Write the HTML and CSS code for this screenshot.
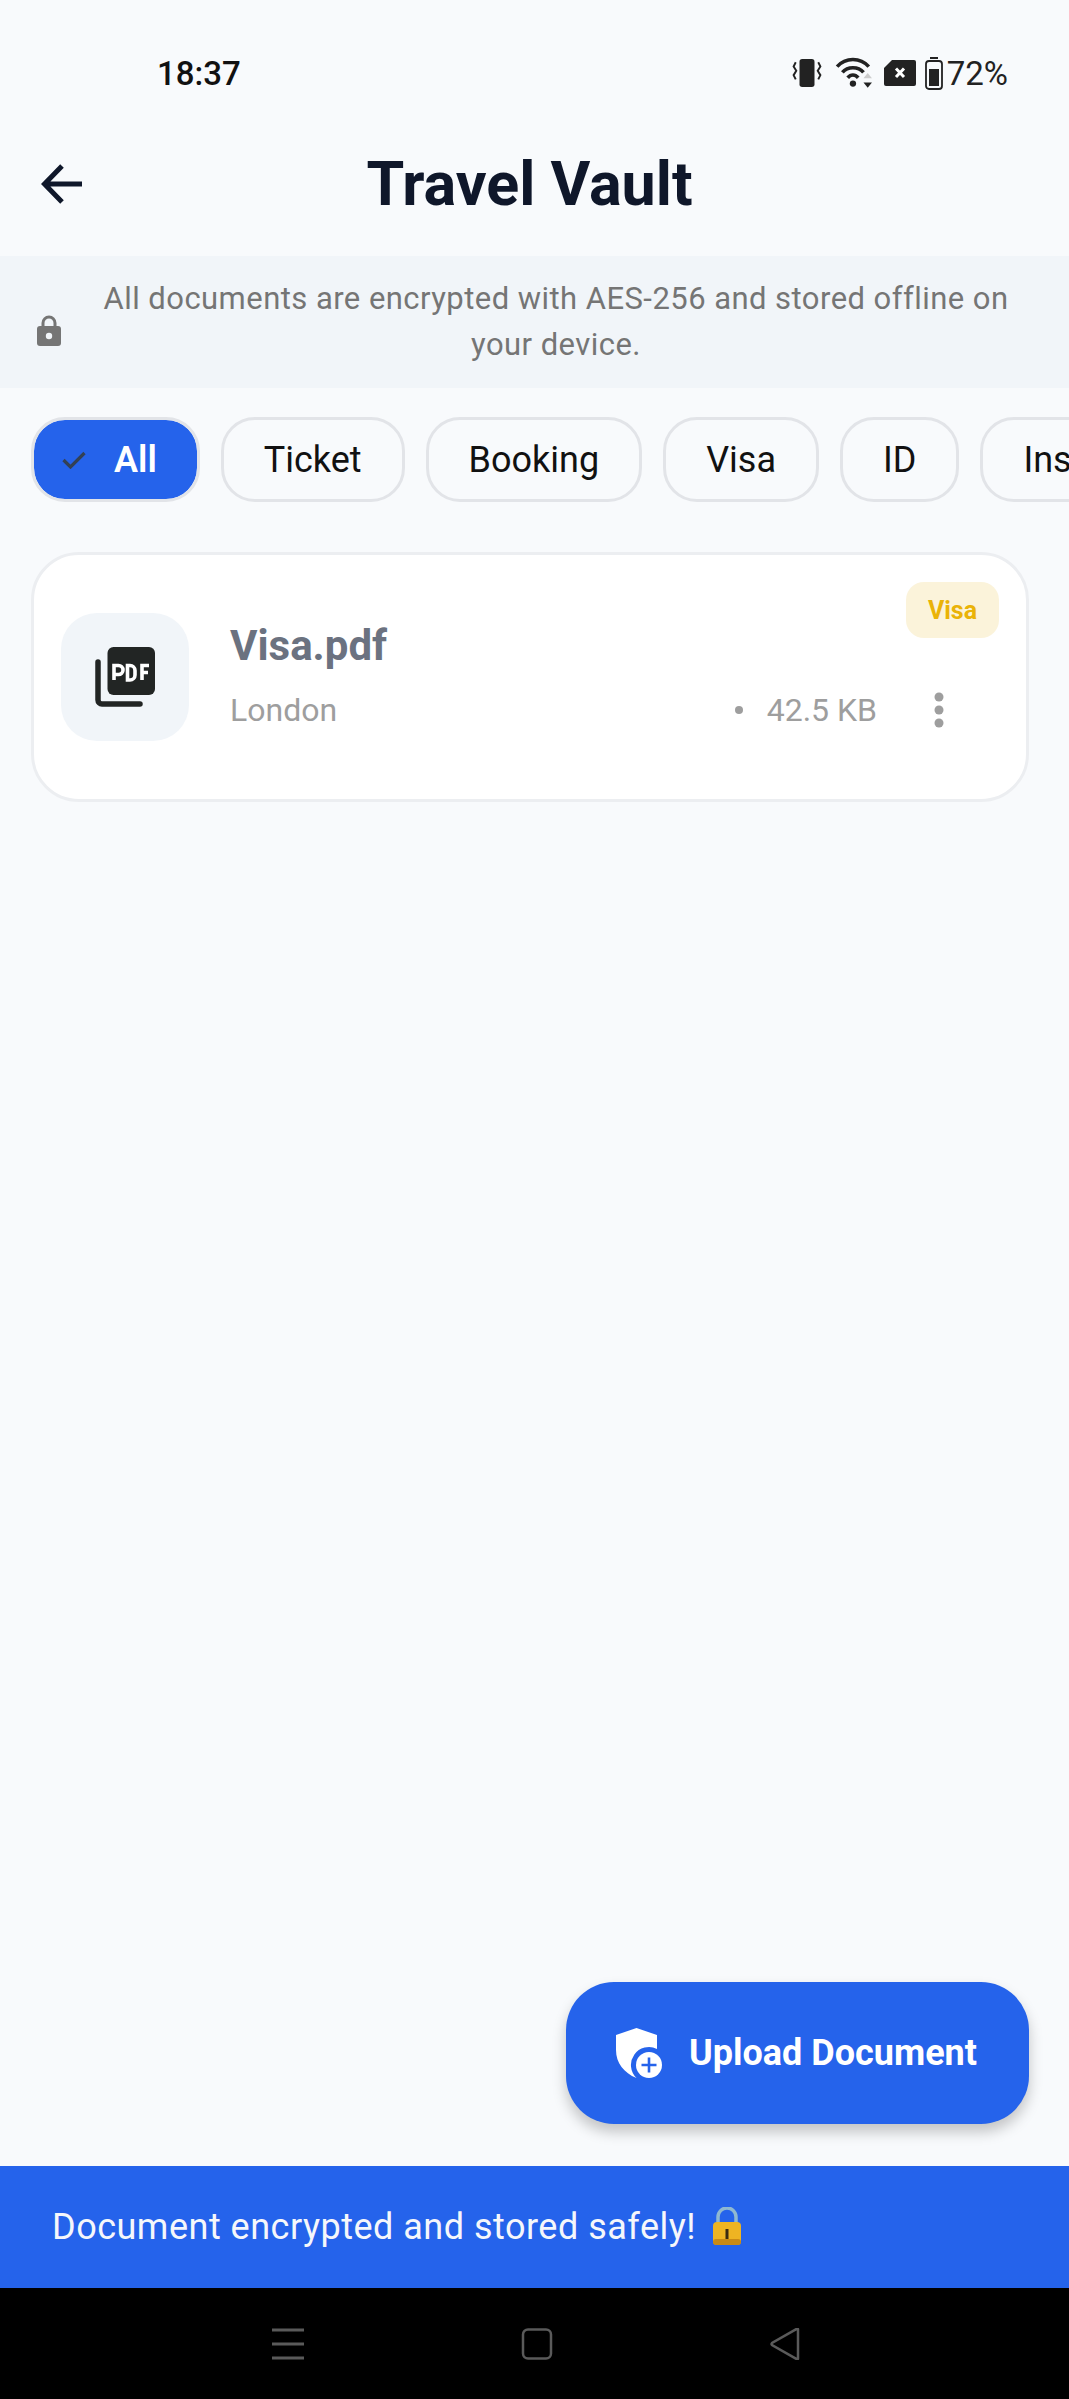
FILE: index.html
```html
<!DOCTYPE html>
<html lang="en">
<head>
  <meta charset="UTF-8">
  <meta name="viewport" content="width=device-width, initial-scale=1.0">
  <title>Travel Vault</title>
  <link rel="stylesheet" href="styles.css">
</head>
<body>
  <!-- Status bar -->
  <div class="status-bar">
    <span class="status-time">18:37</span>
    <div class="status-icons">
      <svg class="icon-vibrate" viewBox="0 0 28 28"><rect x="7" y="1" width="14" height="26" rx="2.5" fill="#222"/><path d="M3.500 4 1.500 8l2.500 4-2.500 4 2 4M24.500 4l2 4-2.500 4 2.500 4-2 4" fill="none" stroke="#222" stroke-width="1.800"/></svg>
      <svg class="icon-wifi" viewBox="0 0 36 32"><path d="M2 10C10 1 24 1 32 10M7 15.500C12 9.500 22 9.500 27 15.500M12 20.500C15 17 19 17 22 20.500" fill="none" stroke="#222" stroke-width="3.400"/><circle cx="17" cy="26" r="3" fill="#222"/><path d="M27 21h8l-4-5z" fill="#ccc"/><path d="M27 25h8l-4 5z" fill="#222"/></svg>
      <svg class="icon-sim" viewBox="0 0 32 26"><path d="M8 0h22a2 2 0 0 1 2 2v22a2 2 0 0 1-2 2H2a2 2 0 0 1-2-2V8z" fill="#222"/><path d="M12 8.500l8 8.500M20 8.500l-8 8.500" stroke="#fff" stroke-width="3"/></svg>
      <svg class="icon-battery" viewBox="0 0 18 33"><rect x="5" y="0" width="8" height="2" fill="#222"/><rect x="1" y="4" width="16" height="28" rx="3" fill="none" stroke="#222" stroke-width="1.800"/><rect x="4" y="12" width="10" height="17" fill="#222"/></svg>
      <span class="status-battery">72%</span>
    </div>
  </div>

  <!-- App bar -->
  <header class="app-bar">
    <svg class="back-icon" viewBox="0 0 42 42"><path d="M41 21H4M21 3 3.500 21 21 39" fill="none" stroke="#0f172a" stroke-width="5"/></svg>
    <h1 class="app-title">Travel Vault</h1>
  </header>

  <!-- Encryption notice -->
  <div class="notice">
    <svg class="notice-lock" viewBox="0 0 24 31"><path d="M6 13V8a6 6 0 0 1 12 0v5" fill="none" stroke="#757575" stroke-width="3"/><path d="M3 11h18a3 3 0 0 1 3 3v14a3 3 0 0 1-3 3H3a3 3 0 0 1-3-3V14a3 3 0 0 1 3-3z" fill="#757575"/><circle cx="12" cy="21" r="3.200" fill="#f1f5f9"/></svg>
    <p class="notice-text">All documents are encrypted with AES-256 and stored offline on your device.</p>
  </div>

  <!-- Filter chips -->
  <div class="chips">
    <div class="chip chip-active">
      <svg class="chip-check" viewBox="0 0 24 18"><path d="M1.500 9 8.500 16 22.500 2" fill="none" stroke="#334155" stroke-width="3.200"/></svg>
      <span>All</span>
    </div>
    <div class="chip">Ticket</div>
    <div class="chip">Booking</div>
    <div class="chip">Visa</div>
    <div class="chip">ID</div>
    <div class="chip">Insurance</div>
  </div>

  <main class="content">
    <!-- Document card -->
    <div class="doc-card">
      <div class="doc-icon">
        <svg viewBox="0 0 60 60" width="60" height="60">
          <rect x="12.500" y="0" width="47.500" height="48" rx="6" fill="#222524"/>
          <path d="M3 15v38a4 4 0 0 0 4 4h38" fill="none" stroke="#222524" stroke-width="5.500" stroke-linecap="round"/>
          <path d="M19 33V18.500h4.500a4 4 0 0 1 0 9H19M32.500 18.500V33h2.500a5 5 0 0 0 5-5v-4.500a5 5 0 0 0-5-5zM47 33V18.500h7M47 25.500h6" fill="none" stroke="#fff" stroke-width="3.600"/>
        </svg>
      </div>
      <div class="doc-info">
        <div class="doc-name">Visa.pdf</div>
        <div class="doc-meta">
          <span class="doc-place">London</span>
          <span class="doc-dot"></span>
          <span class="doc-size">42.5 KB</span>
          <svg class="doc-more" viewBox="0 0 12 36"><circle cx="6" cy="5" r="4.500" fill="#9e9e9e"/><circle cx="6" cy="18" r="4.500" fill="#9e9e9e"/><circle cx="6" cy="31" r="4.500" fill="#9e9e9e"/></svg>
        </div>
      </div>
      <span class="doc-badge">Visa</span>
    </div>

    <!-- Upload button -->
    <button class="upload-btn">
      <svg class="upload-icon" viewBox="0 0 46 50">
        <path d="M20.500 0 41 7V20.900A18 18 0 0 0 20.500 50C8 45 0 35 0 22V7z" fill="#fff"/>
        <circle cx="33" cy="37" r="13" fill="#fff"/>
        <path d="M33 29.500v15M25.500 37h15" stroke="#2563eb" stroke-width="2.600"/>
      </svg>
      <span>Upload Document</span>
    </button>
  </main>

  <!-- Snackbar -->
  <div class="snackbar">
    <span>Document encrypted and stored safely!</span>
    <svg class="snack-lock" viewBox="0 0 32 40"><path d="M7 19V10a9 9 0 0 1 18 0v9" fill="none" stroke="#8fb8d0" stroke-width="3.500"/><rect x="2" y="15" width="28" height="23" rx="4" fill="#eeb422"/><rect x="2" y="32" width="28" height="6" rx="3" fill="#c98a16"/><path d="M16 22v10" stroke="#3a2a10" stroke-width="3"/></svg>
  </div>

  <!-- Navigation bar -->
  <nav class="nav-bar">
    <svg class="nav-icon" viewBox="0 0 34 32"><path d="M1 2h32M1 16h32M1 30h32" stroke="#5a5a5a" stroke-width="3"/></svg>
    <svg class="nav-icon" viewBox="0 0 34 32"><rect x="3" y="1.500" width="28" height="29" rx="5" fill="none" stroke="#5a5a5a" stroke-width="2.500"/></svg>
    <svg class="nav-icon" viewBox="0 0 34 32"><path d="M29 1.500v29a.8.800 0 0 1-1.400.6L3 17a1.500 1.500 0 0 1 0-2L27.600.900a.8.800 0 0 1 1.400.6z" fill="none" stroke="#5a5a5a" stroke-width="2.500"/></svg>
  </nav>
</body>
</html>
```

FILE: styles.css
```css
* {
  margin: 0;
  padding: 0;
  box-sizing: border-box;
}

body {
  font-family: 'Roboto', sans-serif;
  background-color: #f8fafc;
  color: #0f172a;
  display: flex;
  flex-direction: column;
  height: 2399px;
  overflow: hidden;
}

/* Status bar */
.status-bar {
  height: 120px;
  flex-shrink: 0;
  display: flex;
  align-items: center;
  justify-content: space-between;
  padding: 26px 61px 0 157px;
}

.status-time {
  font-size: 33px;
  font-weight: 500;
  color: #111;
}

.status-icons {
  display: flex;
  align-items: center;
  color: #222;
}

.icon-vibrate {
  width: 30px;
  height: 30px;
  margin-right: 13px;
}

.icon-wifi {
  width: 38px;
  height: 34px;
  margin-right: 11px;
}

.icon-sim {
  width: 32px;
  height: 26px;
  margin-right: 9px;
}

.icon-battery {
  width: 18px;
  height: 33px;
  margin-right: 4px;
}

.status-battery {
  font-size: 33px;
}

/* App bar */
.app-bar {
  height: 136px;
  flex-shrink: 0;
  position: relative;
  display: flex;
  align-items: center;
  justify-content: center;
  padding: 0 10px 8px 0;
}

.back-icon {
  position: absolute;
  left: 41px;
  top: 43px;
  width: 42px;
  height: 42px;
}

.app-title {
  font-size: 61px;
  font-weight: 700;
  color: #0f172a;
}

/* Notice */
.notice {
  height: 132px;
  flex-shrink: 0;
  background-color: #f1f5f9;
  display: flex;
  align-items: center;
  padding: 0 36px 0 37px;
}

.notice-lock {
  width: 24px;
  height: 31px;
  margin-top: 17px;
  margin-right: 18px;
  flex-shrink: 0;
}

.notice-text {
  flex: 1;
  text-align: center;
  font-size: 31px;
  line-height: 46px;
  letter-spacing: 0.45px;
  color: #757575;
}

/* Chips */
.chips {
  display: flex;
  gap: 21px;
  padding: 29px 0 0 31px;
  overflow: hidden;
  flex-shrink: 0;
}

.chip {
  height: 85px;
  padding: 0 40px;
  flex-shrink: 0;
  display: flex;
  align-items: center;
  border: 3px solid #e2e4e8;
  border-radius: 34px;
  font-size: 36px;
  color: #111;
}

.chip-active {
  background-color: #2563eb;
  background-clip: padding-box;
  color: #fff;
  font-weight: 600;
  padding: 0 40px 0 28px;
}

.chip-check {
  width: 24px;
  height: 18px;
  margin-right: 28px;
}

/* Content */
.content {
  flex: 1;
  display: flex;
  flex-direction: column;
  padding: 50px 40px 42px 31px;
}

/* Document card */
.doc-card {
  height: 250px;
  position: relative;
  display: flex;
  align-items: center;
  padding: 0 81px 0 27px;
  background-color: #fff;
  border: 3px solid #eceef1;
  border-radius: 48px;
}

.doc-icon {
  width: 128px;
  height: 128px;
  flex-shrink: 0;
  margin-right: 41px;
  display: flex;
  align-items: center;
  justify-content: center;
  background-color: #f1f5f9;
  border-radius: 36px;
}

.doc-info {
  flex: 1;
  margin-top: -5px;
}

.doc-name {
  font-size: 42px;
  font-weight: 700;
  color: #6b7280;
  margin-bottom: 22px;
}

.doc-meta {
  display: flex;
  align-items: center;
  height: 36px;
  font-size: 32px;
  color: #9e9e9e;
}

.doc-place {
  flex: 1;
}

.doc-dot {
  width: 8px;
  height: 8px;
  border-radius: 50%;
  background-color: #9e9e9e;
  margin-right: 24px;
}

.doc-size {
  margin-right: 56px;
}

.doc-more {
  width: 12px;
  height: 36px;
}

.doc-badge {
  position: absolute;
  top: 27px;
  right: 27px;
  width: 93px;
  height: 56px;
  display: flex;
  align-items: center;
  justify-content: center;
  background-color: #fbf3da;
  border-radius: 18px;
  font-size: 25px;
  font-weight: 700;
  color: #eab308;
}

/* Upload button */
.upload-btn {
  margin-top: auto;
  align-self: flex-end;
  width: 463px;
  height: 142px;
  display: flex;
  align-items: center;
  padding-left: 50px;
  border: none;
  border-radius: 48px;
  background-color: #2563eb;
  color: #fff;
  font-family: 'Roboto', sans-serif;
  font-size: 36px;
  font-weight: 700;
  box-shadow: 0 8px 14px rgba(0, 0, 0, 0.22);
}

.upload-icon {
  width: 46px;
  height: 50px;
  margin-right: 27px;
}

/* Snackbar */
.snackbar {
  height: 122px;
  flex-shrink: 0;
  display: flex;
  align-items: center;
  padding-left: 52px;
  background-color: #2563eb;
  color: #f5f7fb;
  font-size: 36px;
  letter-spacing: 0.5px;
}

.snack-lock {
  width: 32px;
  height: 40px;
  margin-left: 15px;
}

/* Navigation bar */
.nav-bar {
  height: 111px;
  flex-shrink: 0;
  display: flex;
  justify-content: center;
  align-items: center;
  gap: 215px;
  background-color: #000;
  padding-left: 5px;
}

.nav-icon {
  width: 34px;
  height: 32px;
}
```
